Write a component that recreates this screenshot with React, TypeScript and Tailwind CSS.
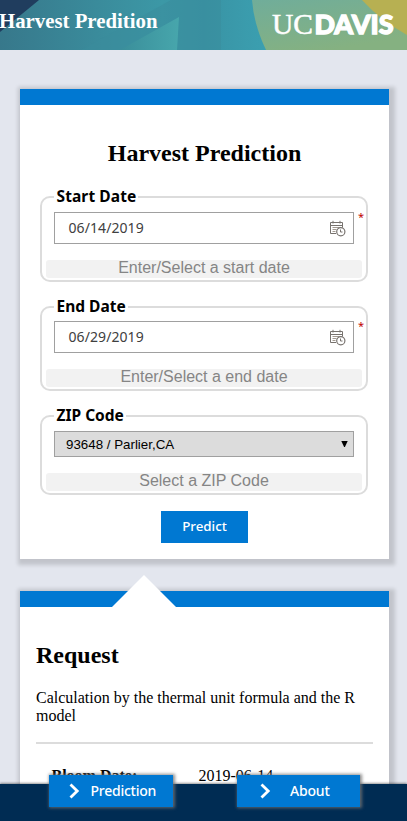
import React from "react";

const SANS = "font-['Noto_Sans','Open_Sans',sans-serif]";
const SERIF = "font-['Liberation_Serif',serif]";
const ARIAL = "font-['Liberation_Sans',sans-serif]";

function CalendarIcon() {
  return (
    <svg width="17" height="17" viewBox="0 0 17 17" fill="none" stroke="#77726e" strokeWidth="1">
      <path d="M7 13.5H1.5V2.5h12v5M1.5 5.5h12M4 .8v2.7M11 .8v2.7" />
      <path d="M3.5 7.5h7M3.5 9.5h4M3.5 11.5h3" stroke="#a39a92" />
      <circle cx="11.8" cy="11.8" r="4.1" fill="#fff" strokeWidth="1.2" />
      <path d="M11.5 9.5v2.5h2" />
    </svg>
  );
}

function UcDavisLogo() {
  return (
    <svg width="128" height="40" viewBox="0 0 128 40" fill="#fff" className="shrink-0" aria-label="UC Davis">
      <text x="1" y="28.9" fontFamily="Liberation Serif, serif" fontSize="29" stroke="#fff" strokeWidth=".5" textLength="41" lengthAdjust="spacingAndGlyphs">UC</text>
      <text x="43.5" y="28.7" fontFamily="Lato, sans-serif" fontWeight="900" fontSize="26" stroke="#fff" strokeWidth="1.3" textLength="79" lengthAdjust="spacingAndGlyphs">DAVIS</text>
    </svg>
  );
}

function Header() {
  return (
    <header className="relative flex h-[50px] items-start justify-between overflow-hidden">
      <svg className="absolute inset-0" width="407" height="50" viewBox="0 0 407 50">
        <defs>
          <linearGradient id="teal" x1="0" y1="0" x2="1" y2="0">
            <stop offset="0" stopColor="#37788b" />
            <stop offset=".4" stopColor="#3c98a6" />
            <stop offset=".5" stopColor="#3993a4" />
            <stop offset=".65" stopColor="#3b9fb0" />
          </linearGradient>
          <linearGradient id="green" x1="0" y1="0" x2=".5" y2="1">
            <stop offset="0" stopColor="#70ad9a" />
            <stop offset="1" stopColor="#85b181" />
          </linearGradient>
          <linearGradient id="peak" x1="0" y1="0" x2="1" y2="0">
            <stop offset="0" stopColor="#3a8e9a" />
            <stop offset="1" stopColor="#47a6ac" />
          </linearGradient>
        </defs>
        <path d="M0 0h407v50H0z" fill="url(#teal)" />
        <path d="M81 50 171 0h50v50z" fill="#398c9b" opacity=".5" />
        <path d="m120 50 59-33-2 33z" fill="url(#peak)" />
        <path d="M0 0h39L0 32z" fill="#203d5e" />
        <path d="M252 0q2 25 14 50h141V0z" fill="url(#green)" />
        <path d="M362 0q18 20 45 35V0z" fill="#b7b052" />
      </svg>
      <h1 className={`${SERIF} relative mt-[9px] -ml-px text-[20.8px] leading-6 font-bold text-white`}>Harvest Predition</h1>
      <div className="relative mt-[5px] mr-[8px]"><UcDavisLogo /></div>
    </header>
  );
}

function Field({ label, hint, className, legendClass, children }: {
  label: string; hint: string; className: string; legendClass: string; children: React.ReactNode;
}) {
  return (
    <fieldset className={`${className} w-[328px] min-w-0 rounded-[10px] border-2 border-[#dcdcdc] px-1`}>
      <legend className={`${SANS} ${legendClass} ml-2 h-5 px-[2.5px] text-[15.5px] leading-[19px] font-bold whitespace-nowrap text-black`}>{label}</legend>
      {children}
      <p className={`${ARIAL} mt-4 h-[18px] rounded-[3px] bg-[#f2f2f2] text-center text-base leading-4 text-[#858585]`}>{hint}</p>
    </fieldset>
  );
}

function DateInput({ value }: { value: string }) {
  return (
    <div className="ml-2 flex w-[308px] items-start">
      <div className="flex h-8 w-[300px] shrink-0 items-center justify-between border border-[#a0a0a0] pr-[7px] pl-[13.5px]">
        <span className={`${SANS} text-[14px] leading-5 tracking-[0.08px] text-[#404040]`}>{value}</span>
        <CalendarIcon />
      </div>
      <span className={`${SANS} ml-[4px] h-3 w-1 text-[11px] leading-[10px] text-[#c00000]`}>*</span>
    </div>
  );
}

function Card({ className, children }: { className: string; children: React.ReactNode }) {
  return (
    <section className={`${className} ml-5 w-[369px] border-t-[16px] border-[#0078d2] bg-white shadow-[2px_2px_4px_4px_rgba(0,0,0,0.15)]`}>
      {children}
    </section>
  );
}

function NavButton({ label, className, labelClass }: { label: string; className: string; labelClass: string }) {
  return (
    <button className={`${className} ${SANS} flex h-8 items-center bg-[#0078d2] text-[14px] font-medium text-white shadow-[1px_0_3px_1px_rgba(115,115,115,0.8)]`}>
      <svg width="11" height="16" viewBox="0 0 11 16" fill="none" stroke="#fff" strokeWidth="2.8">
        <path d="m1.5 1.5 6.7 6.5-6.7 6.5" />
      </svg>
      <span className={`${labelClass} -mt-px`}>{label}</span>
    </button>
  );
}

export default function App() {
  return (
    <div className="relative h-[821px] w-[407px] overflow-hidden bg-[#e3e6ee] text-black">
      <Header />
      <main className="pt-[39px]">
        <Card className="h-[470px]">
          <div className="flex flex-col items-center pt-[34px] pr-px">
            <h2 className={`${SERIF} pl-px text-2xl leading-7 font-bold`}>Harvest Prediction</h2>
            <Field label="Start Date" hint="Enter/Select a start date" className="mt-5 h-[95px]" legendClass="mb-[5px] w-[84px] tracking-[0.1px]">
              <DateInput value="06/14/2019" />
            </Field>
            <Field label="End Date" hint="Enter/Select a end date" className="mt-[15px] h-[94px]" legendClass="mb-[4px] w-[74px]">
              <DateInput value="06/29/2019" />
            </Field>
            <Field label="ZIP Code" hint="Select a ZIP Code" className="mt-[15px] h-[89px]" legendClass="mb-[5px] w-[72px]">
              <div className={`${ARIAL} ml-2 flex h-[26px] w-[300px] items-center justify-between border border-[#a0a0a0] bg-[#dcdcdc] pt-px pr-[5px] pl-[11px] text-[13.33px]`}>
                <span>93648 / Parlier,CA</span>
                <svg className="-mt-[2px]" width="7" height="6" viewBox="0 0 7 6"><path d="M.3 0h6.4L3.9 6h-.8z" /></svg>
              </div>
            </Field>
            <button className={`${SANS} mt-4 h-8 w-[87px] bg-[#0078d2] pl-px text-[13.33px] font-medium text-white`}>Predict</button>
          </div>
        </Card>
        <Card className="relative mt-8 h-[400px]">
          <svg className="absolute -top-8 left-[92px]" width="64" height="32" viewBox="0 0 64 32"><path d="m32 0 32 32H0z" fill="#fff" /></svg>
          <div className={`${SERIF} px-4 pt-[34px]`}>
            <h2 className="text-2xl leading-7 font-bold">Request</h2>
            <p className="mt-5 text-base leading-[18px]">Calculation by the thermal unit formula and the R model</p>
            <hr className="mt-[17px] border-t-2 border-[#dcdcdc]" />
            <dl className="mt-[23px] flex pl-[15.5px] text-base leading-[18px]">
              <dt className="w-[147px] font-bold">Bloom Date:</dt>
              <dd>2019-06-14</dd>
            </dl>
          </div>
        </Card>
      </main>
      <footer className="absolute inset-x-0 bottom-0 flex h-[37px] items-start bg-[#002c53] shadow-[0_-1px_2px_rgba(0,0,0,0.4)]">
        <NavButton label="Prediction" className="-mt-[9px] ml-[49px] w-[124px] pl-[20px]" labelClass="ml-[10.5px] tracking-[-0.25px]" />
        <NavButton label="About" className="-mt-[9px] ml-[64px] w-[123px] pl-[23px]" labelClass="ml-[19px] tracking-[-0.2px]" />
      </footer>
    </div>
  );
}
